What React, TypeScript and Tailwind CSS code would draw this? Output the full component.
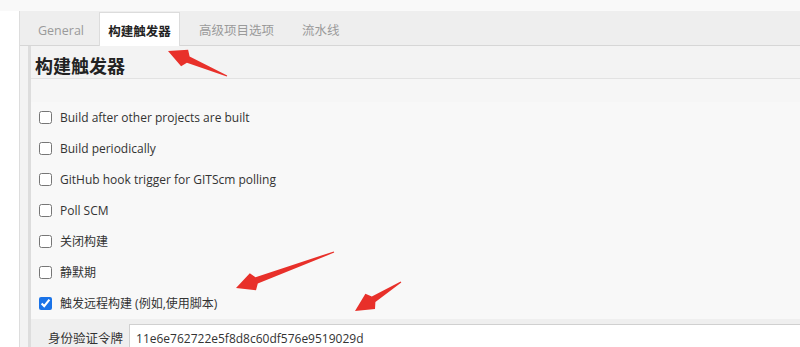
import React from "react";

const font = { fontFamily: '"Open Sans", "Noto Sans CJK SC", sans-serif' };

type Pt = [number, number];

// tapered arrow: thin tail, thicker shaft near the head, triangular head
function arrowPoints(tail: Pt, tip: Pt, headLen = 22, headHalf = 9, shaftHalf = 3.4, tailHalf = 0.6) {
  const dx = tip[0] - tail[0];
  const dy = tip[1] - tail[1];
  const len = Math.hypot(dx, dy);
  const ux = dx / len;
  const uy = dy / len;
  const nx = -uy;
  const ny = ux;
  const bx = tip[0] - ux * headLen;
  const by = tip[1] - uy * headLen;
  const pts: Pt[] = [
    [tail[0] + nx * tailHalf, tail[1] + ny * tailHalf],
    [bx + nx * shaftHalf, by + ny * shaftHalf],
    [bx + nx * headHalf + ux * 4, by + ny * headHalf + uy * 4],
    tip,
    [bx - nx * headHalf + ux * 4, by - ny * headHalf + uy * 4],
    [bx - nx * shaftHalf, by - ny * shaftHalf],
    [tail[0] - nx * tailHalf, tail[1] - ny * tailHalf],
  ];
  return pts.map((p) => `${p[0].toFixed(1)},${p[1].toFixed(1)}`).join(" ");
}

const triggers = [
  { label: "Build after other projects are built", checked: false },
  { label: "Build periodically", checked: false },
  { label: "GitHub hook trigger for GITScm polling", checked: false },
  { label: "Poll SCM", checked: false },
  { label: "关闭构建", checked: false },
  { label: "静默期", checked: false },
  { label: "触发远程构建 (例如,使用脚本)", checked: true },
];

function Tabs() {
  return (
    <div className="flex h-[35px] items-end border-b border-[#d6d6d6] bg-[#eeeeee] text-[12.5px]">
      <div className="flex h-[33px] w-[79px] items-center pl-[18px] pt-[5px] text-[#9a9a9a]">General</div>
      <div className="-mb-px flex h-[34px] w-[81px] items-center justify-center border border-b-0 border-[#dcdcdc] bg-white pt-[5px] font-bold text-[#222]">
        构建触发器
      </div>
      <div className="flex h-[33px] w-[103px] items-center pl-[19px] pt-[5px] text-[#9a9a9a]">高级项目选项</div>
      <div className="flex h-[33px] items-center pl-[19px] pt-[5px] text-[#9a9a9a]">流水线</div>
    </div>
  );
}

function TriggerRow({ label, checked }: { label: string; checked: boolean }) {
  return (
    <div className="flex h-[31px] items-center pl-[8px]">
      <input
        type="checkbox"
        readOnly
        defaultChecked={checked}
        className="m-0 h-[13px] w-[13px] accent-[#1a73e8]"
      />
      <span className="ml-[8px] text-[12px] text-[#333]">{label}</span>
    </div>
  );
}

export default function App() {
  return (
    <div className="relative h-[347px] w-[800px] overflow-hidden bg-[#f9f9f9]" style={font}>
      <div className="flex h-[400px] pt-[11px]">
        <div className="w-[19px] shrink-0 bg-white" />
        <div className="flex min-w-0 flex-1 flex-col border-l border-[#dddddd] bg-[#f3f3f3]">
          <Tabs />
          <div className="ml-[8px] flex flex-1 flex-col border-l-[3px] border-[#dddddd] bg-[#f8f8f8]">
            <div className="flex h-[33px] items-center border-b border-[#e2e2e2] bg-[#f3f3f3] pl-[4px] pt-[8px] text-[18px] font-bold text-[#222]">
              构建触发器
            </div>
            <div className="h-[23px] bg-[#f6f6f6]" />
            <div className="flex flex-col">
              {triggers.map((t) => (
                <TriggerRow key={t.label} label={t.label} checked={t.checked} />
              ))}
            </div>
            <div className="flex items-stretch bg-[#efefef] pl-[17px] pt-[5px]">
              <span className="flex items-center text-[12.5px] text-[#333]">身份验证令牌</span>
              <div className="ml-[6px] flex h-[30px] flex-1 items-center border border-r-0 border-[#d0d0d0] bg-white pl-[6px] text-[12px] text-[#333]">
                11e6e762722e5f8d8c60df576e9519029d
              </div>
            </div>
          </div>
        </div>
      </div>
      <svg className="pointer-events-none absolute left-0 top-0" width="800" height="347">
        <polygon points={arrowPoints([227, 76], [168, 51])} fill="#e8302a" />
        <polygon points={arrowPoints([334, 252], [236, 288])} fill="#e8302a" />
        <polygon points={arrowPoints([401, 282], [355, 311])} fill="#e8302a" />
      </svg>
    </div>
  );
}
